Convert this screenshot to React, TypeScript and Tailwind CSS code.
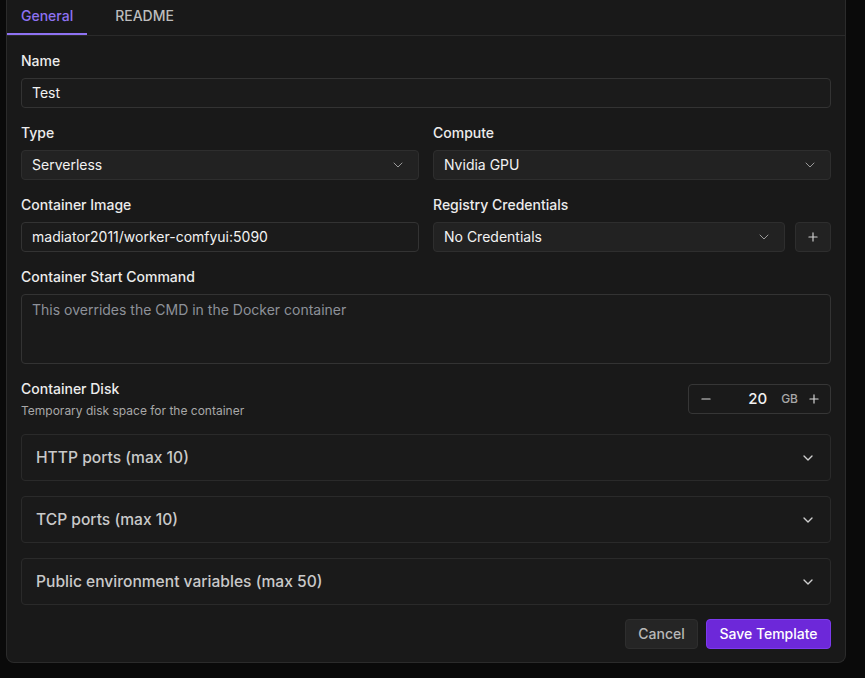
import { ChevronDown, Minus, Plus } from "lucide-react";

const Label = ({ children }: { children: React.ReactNode }) => (
  <div className="h-5 mb-[7px] text-sm leading-5 font-medium text-[#ececec]">{children}</div>
);

const Select = ({ value }: { value: string }) => (
  <div className="w-full h-[30px] flex items-center justify-between pl-[10px] pr-[12px] rounded-[4px] bg-[#222222] border border-[#2e2e2e] text-sm text-[#f2f2f2]">
    <span>{value}</span>
    <ChevronDown className="w-4 h-4 text-[#9a9a9a]" strokeWidth={1.5} />
  </div>
);

const Input = ({ value }: { value: string }) => (
  <div className="h-[30px] flex items-center px-[10px] rounded-[4px] bg-[#1b1b1b] border border-[#333333] text-sm text-[#f2f2f2]">
    {value}
  </div>
);

const Accordion = ({ title }: { title: string }) => (
  <div className="h-[47px] flex items-center justify-between pl-[14px] pr-[14px] rounded-[4px] bg-[#1a1a1a] border border-[#2a2a2a]">
    <span className="text-[15.6px] font-medium text-[#c9c9c9]">{title}</span>
    <ChevronDown className="w-4 h-4 text-[#cfcfcf]" strokeWidth={2} />
  </div>
);

export default function App() {
  return (
    <div
      className="w-[865px] h-[678px] bg-[#0a0a0a] pl-[6px] overflow-hidden"
      style={{ fontFamily: "Inter, 'Noto Sans', sans-serif" }}
    >
      <div className="w-[840px] h-[663px] bg-[#191919] border-x border-b border-[#2b2b2b] rounded-b-[8px] flex flex-col">
        {/* Tabs */}
        <div className="h-[36px] flex border-b border-[#2a2a2a]">
          <div className="relative px-[14px] pb-[3px] flex items-center text-sm font-medium text-[#8e72f2]">
            General
            <div className="absolute left-0 right-0 bottom-0 h-[2px] bg-[#8e72f2]" />
          </div>
          <div className="ml-[14px] px-[14px] pb-[3px] flex items-center text-sm font-medium text-[#bdbdbd]">
            README
          </div>
        </div>

        <div className="px-[14px] pt-[15px] flex flex-col">
          <div>
            <Label>Name</Label>
            <Input value="Test" />
          </div>

          <div className="mt-[15px] flex gap-[14px]">
            <div className="flex-1">
              <Label>Type</Label>
              <Select value="Serverless" />
            </div>
            <div className="flex-1">
              <Label>Compute</Label>
              <Select value="Nvidia GPU" />
            </div>
          </div>

          <div className="mt-[15px] flex gap-[14px]">
            <div className="flex-1">
              <Label>Container Image</Label>
              <Input value="madiator2011/worker-comfyui:5090" />
            </div>
            <div className="flex-1">
              <Label>Registry Credentials</Label>
              <div className="flex gap-[10px]">
                <div className="flex-1">
                  <Select value="No Credentials" />
                </div>
                <div className="w-[36px] h-[30px] flex items-center justify-center rounded-[4px] bg-[#222222] border border-[#2e2e2e]">
                  <Plus className="w-[14px] h-[14px] text-[#d0d0d0]" strokeWidth={2} />
                </div>
              </div>
            </div>
          </div>

          <div className="mt-[15px]">
            <Label>Container Start Command</Label>
            <div className="h-[70px] px-[10px] pt-[5px] rounded-[4px] bg-[#1a1a1a] border border-[#333333] text-sm text-[#8d9199]">
              This overrides the CMD in the Docker container
            </div>
          </div>

          <div className="mt-[15px] flex items-center justify-between">
            <div>
              <div className="h-5 text-sm leading-5 font-medium text-[#ececec]">Container Disk</div>
              <div className="mt-1 text-xs leading-4 text-[#a8a8a8]">Temporary disk space for the container</div>
            </div>
            <div className="w-[143px] h-[30px] flex items-center pl-[10px] pr-[9px] rounded-[4px] border border-[#363636] bg-[#1a1a1a]">
              <Minus className="w-[14px] h-[14px] text-[#d8d8d8]" strokeWidth={2} />
              <span className="flex-1 text-right text-[15px] font-medium text-[#f2f2f2]">20</span>
              <span className="ml-[14px] text-xs font-medium text-[#a8a8a8]">GB</span>
              <Plus className="ml-[9px] w-[14px] h-[14px] text-[#d8d8d8]" strokeWidth={2} />
            </div>
          </div>

          <div className="mt-[15px] flex flex-col gap-[15px]">
            <Accordion title="HTTP ports (max 10)" />
            <Accordion title="TCP ports (max 10)" />
            <Accordion title="Public environment variables (max 50)" />
          </div>

          <div className="mt-[14px] flex justify-end gap-[8px]">
            <button className="w-[73px] h-[30px] rounded-[4px] bg-[#252525] border border-[#2e2e2e] text-sm font-medium text-[#b8b8b8]">
              Cancel
            </button>
            <button className="w-[125px] h-[30px] rounded-[4px] bg-[#6d28d9] border border-[#7c3aed] text-sm font-medium text-white">
              Save Template
            </button>
          </div>
        </div>
      </div>
    </div>
  );
}
